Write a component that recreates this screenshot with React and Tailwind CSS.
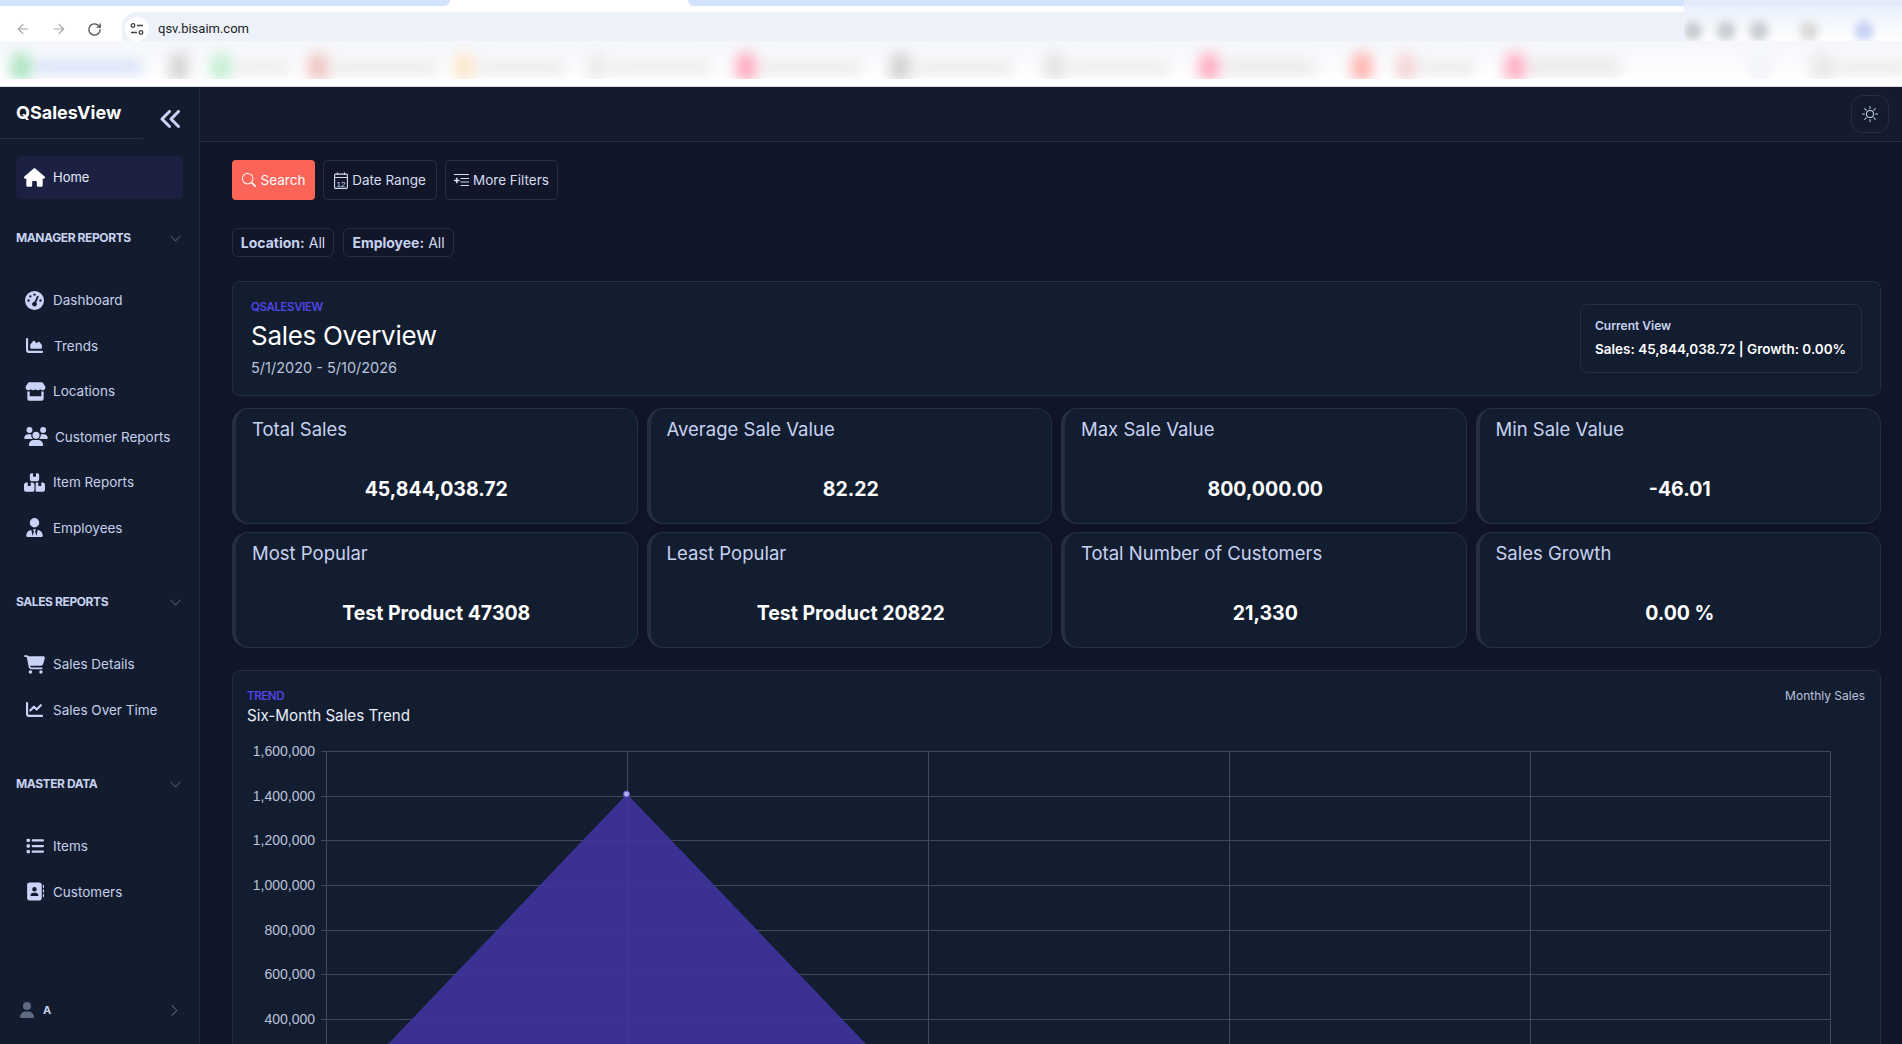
import { FaAddressBook, FaAnglesLeft, FaBoxesStacked, FaCartShopping, FaChartArea, FaChartLine, FaGaugeHigh, FaHouse, FaList, FaStore, FaUser, FaUsers, FaUserTie } from 'react-icons/fa6';
import { BsChevronDown, BsChevronRight, BsSearch, BsSun } from 'react-icons/bs';
import { ArrowLeft, ArrowRight, RotateCw } from 'lucide-react';

const sans = "font-['Inter',sans-serif]";

// icon widths differ per glyph, so each row carries its own icon box and text offset
const sections = [
  {
    title: 'MANAGER REPORTS',
    items: [
      { label: 'Dashboard', icon: FaGaugeHigh, box: 'ml-[1px] w-[19px] h-[19px]', text: 'ml-[9px]' },
      { label: 'Trends', icon: FaChartArea, box: 'ml-[1px] w-[19px] h-[17px]', text: 'ml-[10px]' },
      { label: 'Locations', icon: FaStore, box: 'ml-[1px] w-[21px] h-[19px]', text: 'ml-[7px]' },
      { label: 'Customer Reports', icon: FaUsers, box: 'w-[24px] h-[19px]', text: 'ml-[7px]' },
      { label: 'Item Reports', icon: FaBoxesStacked, box: 'w-[21px] h-[19px]', text: 'ml-[8px]' },
      { label: 'Employees', icon: FaUserTie, box: 'ml-[2px] w-[17px] h-[19px]', text: 'ml-[10px]' },
    ],
  },
  {
    title: 'SALES REPORTS',
    items: [
      { label: 'Sales Details', icon: FaCartShopping, box: 'w-[21px] h-[19px]', text: 'ml-[8px]' },
      { label: 'Sales Over Time', icon: FaChartLine, box: 'ml-[1px] w-[19px] h-[17px]', text: 'ml-[9px]' },
    ],
  },
  {
    title: 'MASTER DATA',
    items: [
      { label: 'Items', icon: FaList, box: 'ml-[2px] w-[18px] h-[18px]', text: 'ml-[9px]' },
      { label: 'Customers', icon: FaAddressBook, box: 'ml-[2px] w-[18px] h-[19px]', text: 'ml-[9px]' },
    ],
  },
];

const stats = [
  { title: 'Total Sales', value: '45,844,038.72' },
  { title: 'Average Sale Value', value: '82.22' },
  { title: 'Max Sale Value', value: '800,000.00' },
  { title: 'Min Sale Value', value: '-46.01' },
  { title: 'Most Popular', value: 'Test Product 47308' },
  { title: 'Least Popular', value: 'Test Product 20822' },
  { title: 'Total Number of Customers', value: '21,330' },
  { title: 'Sales Growth', value: '0.00 %' },
];

const bookmarks = [
  { gap: 'ml-[11px]', icon: 'bg-[#a9e3bd]', w: 'w-[107px]', text: 'bg-[#d5e1f8]' },
  { gap: 'ml-[27px]', icon: 'bg-[#d2d2d2]', w: 'w-0', text: 'bg-[#e8e8e8]' },
  { gap: 'ml-[18px]', icon: 'bg-[#c2eed0]', w: 'w-[56px]', text: 'bg-[#ececec]' },
  { gap: 'ml-[17px]', icon: 'bg-[#eec4bf]', w: 'w-[105px]', text: 'bg-[#ebebeb]' },
  { gap: 'ml-[17px]', icon: 'bg-[#fbe6c8]', w: 'w-[86px]', text: 'bg-[#ebebeb]' },
  { gap: 'ml-[23px]', icon: 'bg-[#eaeaea]', w: 'w-[99px]', text: 'bg-[#ececec]' },
  { gap: 'ml-[26px]', icon: 'bg-[#ffa6bc]', w: 'w-[101px]', text: 'bg-[#ebebeb]' },
  { gap: 'ml-[29px]', icon: 'bg-[#cfcfcf]', w: 'w-[98px]', text: 'bg-[#ebebeb]' },
  { gap: 'ml-[32px]', icon: 'bg-[#e2e2e2]', w: 'w-[102px]', text: 'bg-[#ececec]' },
  { gap: 'ml-[29px]', icon: 'bg-[#ffa9bf]', w: 'w-[92px]', text: 'bg-[#e8e8e8]' },
  { gap: 'ml-[37px]', icon: 'bg-[#ffafab]', w: 'w-0', text: 'bg-[#e8e8e8]' },
  { gap: 'ml-[20px]', icon: 'bg-[#f3d4d4]', w: 'w-[55px]', text: 'bg-[#ebebeb]' },
  { gap: 'ml-[30px]', icon: 'bg-[#ffa9bf]', w: 'w-[91px]', text: 'bg-[#e6e6e6]' },
  { gap: 'ml-[130px]', icon: 'bg-[#f1f3f8]', w: 'w-0', text: 'bg-[#f1f3f8]' },
  { gap: 'ml-[38px]', icon: 'bg-[#e6e6e6]', w: 'w-[70px]', text: 'bg-[#ebebeb]' },
];

const SiteIcon = () => (
  <svg width="14" height="14" viewBox="0 0 14 14" fill="none" stroke="#3c4043" strokeWidth="1.3">
    <circle cx="3" cy="3.5" r="1.8" />
    <path d="M7 3.5h6M1 10.5h6" />
    <circle cx="11" cy="10.5" r="1.8" />
  </svg>
);

const BrowserBar = () => (
  <div className="bg-white h-[87px] border-b border-[#d8dade] overflow-hidden">
    {/* Tab strip */}
    <div className="flex h-[6px]">
      <div className="w-[450px] bg-[#d3e3fd] rounded-br-lg" />
      <div className="w-[238px] bg-white" />
      <div className="w-[996px] bg-[#d3e3fd] rounded-bl-lg" />
      <div className="flex-1 bg-[#e4ebf9]" />
    </div>
    {/* Toolbar */}
    <div className="flex h-[35px]">
      <div className="w-[122px] flex items-center pl-[15px] pt-[11px] gap-[20px] text-[#a4a8ad]">
        <ArrowLeft size={16} strokeWidth={1.8} />
        <ArrowRight size={16} strokeWidth={1.8} />
        <RotateCw size={15} strokeWidth={2} className="text-[#474a4f]" />
      </div>
      <div className="mt-[6px] w-[1562px] bg-[#ecf1fa] rounded-tl-[15px] flex items-center pl-[3px] pt-[5px]">
        <div className="w-[24px] h-[24px] rounded-full bg-white flex items-center justify-center">
          <SiteIcon />
        </div>
        <span className="ml-[9px] text-[13px] text-[#1f1f1f] font-['Roboto',sans-serif]">qsv.bisaim.com</span>
      </div>
      <div className="flex-1 bg-gradient-to-b from-[#eaf0fb] to-white overflow-hidden">
        <div className="flex items-center gap-[15px] pt-[15px] blur-[4px]">
          <div className="shrink-0 w-[18px] h-[20px] rounded-full bg-[#c6c9d0]" />
          <div className="shrink-0 w-[18px] h-[20px] rounded-full bg-[#c6c9d0]" />
          <div className="shrink-0 w-[18px] h-[20px] rounded-full bg-[#c6c9d0]" />
          <div className="shrink-0 w-[18px] h-[20px] rounded-full bg-[#d8d8d8] ml-[17px]" />
          <div className="shrink-0 w-[18px] h-[20px] rounded-full bg-[#c4d0f2] ml-[22px]" />
        </div>
      </div>
    </div>
    {/* Blurred bookmarks */}
    <div className="h-[38px] bg-gradient-to-b from-[#f5f7fc] to-white flex items-center overflow-hidden pt-[14px]">
      {bookmarks.map((b, i) => (
        <div key={i} className={`flex items-center gap-[4px] shrink-0 blur-[7px] ${b.gap}`}>
          <div className={`w-[20px] h-[30px] rounded-full ${b.icon}`} />
          <div className={`h-[14px] ${b.w} ${b.text}`} />
        </div>
      ))}
    </div>
  </div>
);

const Sidebar = () => (
  <aside className="w-[200px] shrink-0 bg-[#131c2e] border-r border-[#232c3f] flex flex-col">
    <div className="flex h-[52px]">
      <div className={`w-[143px] border-b border-[#262e41] pl-[16px] pt-[12px] text-[18px] leading-[28px] font-bold text-white ${sans}`}>
        QSalesView
      </div>
      <FaAnglesLeft className="text-[#c9d3f5] h-[24px] w-[24px] ml-[16px] mt-[20px]" />
    </div>
    <div className="mx-[16px] mt-[17px] h-[43px] rounded-md bg-[#1c2144] flex items-center pl-[8px] text-[#e8ecfb]">
      <FaHouse className="h-[19px] w-[21px] text-white" />
      <span className={`ml-[8px] text-[13px] ${sans}`}>Home</span>
    </div>
    <div className="mt-[24px]">
      {sections.map((section) => (
        <div key={section.title} className="mb-[36.5px]">
          <div className="h-[30px] pl-[16px] pr-[17px] flex items-center justify-between text-[#c7d2f0]">
            <span className={`text-[12px] font-bold tracking-[-0.4px] ${sans}`}>{section.title}</span>
            <BsChevronDown className="w-[13px] h-[13px] text-[#56617a]" />
          </div>
          <div className="mt-[24.5px]">
            {section.items.map((item) => (
              <div key={item.label} className="h-[45.5px] flex items-center pl-[24px] text-[#c5cfec]">
                <item.icon className={`shrink-0 text-[#c9d3f5] ${item.box}`} />
                <span className={`text-[13.5px] ${item.text} ${sans}`}>{item.label}</span>
              </div>
            ))}
          </div>
        </div>
      ))}
    </div>
    <div className="mt-auto h-[68px] pl-[20px] pr-[18px] flex items-center text-[#5e6b82]">
      <FaUser className="h-[16px] w-[14px]" />
      <span className={`ml-[9px] text-[11px] font-bold text-[#c7d2f0] ${sans}`}>A</span>
      <BsChevronRight className="ml-auto w-[13px] h-[13px]" />
    </div>
  </aside>
);

const FilterIcon = () => (
  <svg width="15" height="14" viewBox="0 0 15 14" fill="none" stroke="currentColor" strokeWidth="1.2">
    <path d="M0 1.5h15M6.5 5.5h8.5M6.5 9h8.5M6.5 12.5h8.5" />
    <path d="M0 7.5h5.5M2.75 4.75v5.5" strokeWidth="1.6" />
  </svg>
);

const CalendarIcon = () => (
  <svg width="14" height="17" viewBox="0 0 14 17" fill="none" stroke="currentColor" strokeWidth="1.1">
    <rect x="0.6" y="2.1" width="12.8" height="14.3" rx="1" />
    <path d="M0.6 5.5h12.8M3.5 0.5v2.5M10.5 0.5v2.5" />
    <text x="7" y="14.5" textAnchor="middle" fontSize="8" fontFamily="Liberation Sans" fill="currentColor" stroke="none">12</text>
  </svg>
);

const Toolbar = () => (
  <div className={`flex gap-[8px] text-[13.5px] text-[#d5dcf2] ${sans}`}>
    <button className="h-[40px] w-[83px] rounded bg-[#fb6458] text-white flex items-center justify-center gap-[5px]">
      <BsSearch className="w-[14px] h-[14px]" /> Search
    </button>
    <button className="h-[40px] w-[114px] rounded border border-[#262e41] flex items-center justify-center gap-[4px]">
      <CalendarIcon /> Date Range
    </button>
    <button className="h-[40px] w-[113px] rounded border border-[#262e41] flex items-center justify-center gap-[4px]">
      <FilterIcon /> More Filters
    </button>
  </div>
);

const Chip = ({ label, className }) => (
  <div className={`h-[29px] rounded-md border border-[#262e41] flex items-center justify-center text-[14px] text-[#d5dcf2] ${className}`}>
    <b className="font-bold text-[#c7d2f0] mr-[4px]">{label}:</b> All
  </div>
);

const StatCard = ({ title, value }) => (
  <div className="h-[116px] rounded-2xl bg-[#131d30] border border-[#262e41] border-l-4 pl-[16px] pt-[6px] shadow-[0_4px_12px_rgba(0,0,0,0.12)]">
    <div className="text-[18.5px] leading-[28px] text-[#c7d2f0]">{title}</div>
    <div className="mt-[31px] pr-[16px] text-center text-[19.5px] leading-[30px] font-bold text-white">{value}</div>
  </div>
);

const TrendChart = () => {
  const gridY = [750, 795, 839, 884, 929, 973, 1018];
  const labels = ['1,600,000', '1,400,000', '1,200,000', '1,000,000', '800,000', '600,000', '400,000'];
  const gridX = [326, 627, 928, 1229, 1530, 1830];
  return (
    <svg className="block mt-[10px]" width="1617" height="340" viewBox="247 735 1617 340">
      {gridY.map((y, i) => (
        <g key={y}>
          <line x1="321" x2="1830" y1={y + 0.5} y2={y + 0.5} stroke="#414859" />
          <text x="315" y={y + 5} textAnchor="end" fontSize="14" fill="#b9c2dc" fontFamily="Liberation Sans">{labels[i]}</text>
        </g>
      ))}
      {gridX.map((x) => (
        <line key={x} x1={x + 0.5} x2={x + 0.5} y1="750" y2="1108" stroke="#414859" />
      ))}
      <path d="M326 1108 L627 793 L928 1108 Z" fill="#3f349f" fillOpacity="0.9" />
      <circle cx="626.5" cy="793" r="3" fill="#b4b0ee" stroke="#5b50d8" />
    </svg>
  );
};

export default function App() {
  return (
    <div className={`h-screen overflow-hidden flex flex-col bg-[#111729] ${sans}`}>
      <BrowserBar />
      <div className="flex flex-1 min-h-0">
        <Sidebar />
        <main className="flex-1 min-w-0">
          <div className="h-[55px] bg-[#131b2d] border-b border-[#262e41] flex items-center justify-end pr-[13px]">
            <div className="w-[38px] h-[38px] rounded-xl border border-[#262e41] flex items-center justify-center text-[#c7d2f0]">
              <BsSun className="w-[16px] h-[16px]" />
            </div>
          </div>
          <div className="pl-[32px] pr-[21px] pt-[18px]">
            <Toolbar />
            <div className="flex gap-[9px] mt-[28px]">
              <Chip label="Location" className="w-[102px]" />
              <Chip label="Employee" className="w-[111px]" />
            </div>
            {/* Overview */}
            <section className="mt-[24px] h-[115px] rounded-lg bg-[#131d30] border border-[#262e41] flex items-start justify-between pl-[18px] pr-[18px]">
              <div className="pt-[17px]">
                <div className="text-[11.5px] leading-[16px] font-semibold tracking-[-0.4px] text-[#4f46e5]">QSALESVIEW</div>
                <h1 className="mt-[3px] text-[26px] leading-[36px] text-white -tracking-[0.3px]">Sales Overview</h1>
                <div className="mt-[3px] text-[14.5px] leading-[22px] text-[#b9c2dc]">5/1/2020 - 5/10/2026</div>
              </div>
              <div className="mt-[22px] w-[282px] h-[69px] rounded-lg border border-[#262e41] pl-[14px] pt-[11px]">
                <div className="text-[12px] leading-[20px] font-semibold text-[#c7d2f0]">Current View</div>
                <div className="mt-[3px] text-[13.5px] leading-[20px] font-semibold text-white">Sales: 45,844,038.72 | Growth: 0.00%</div>
              </div>
            </section>
            {/* Stat cards */}
            <div className="grid grid-cols-4 gap-x-[9px] gap-y-[8px] mt-[12px]">
              {stats.map((s) => (
                <StatCard key={s.title} title={s.title} value={s.value} />
              ))}
            </div>
            {/* Trend */}
            <section className="mt-[22px] rounded-lg bg-[#131d30] border border-[#262e41] px-[14px] pt-[17px]">
              <div className="flex justify-between">
                <div>
                  <div className="text-[11.5px] leading-[16px] font-semibold tracking-[-0.4px] text-[#4f46e5]">TREND</div>
                  <div className="mt-[2px] text-[15.2px] leading-[20px] text-[#e8ecfb]">Six-Month Sales Trend</div>
                </div>
                <div className="text-[12px] leading-[16px] text-[#b9c2dc] pr-[1px]">Monthly Sales</div>
              </div>
              <TrendChart />
            </section>
          </div>
        </main>
      </div>
    </div>
  );
}
